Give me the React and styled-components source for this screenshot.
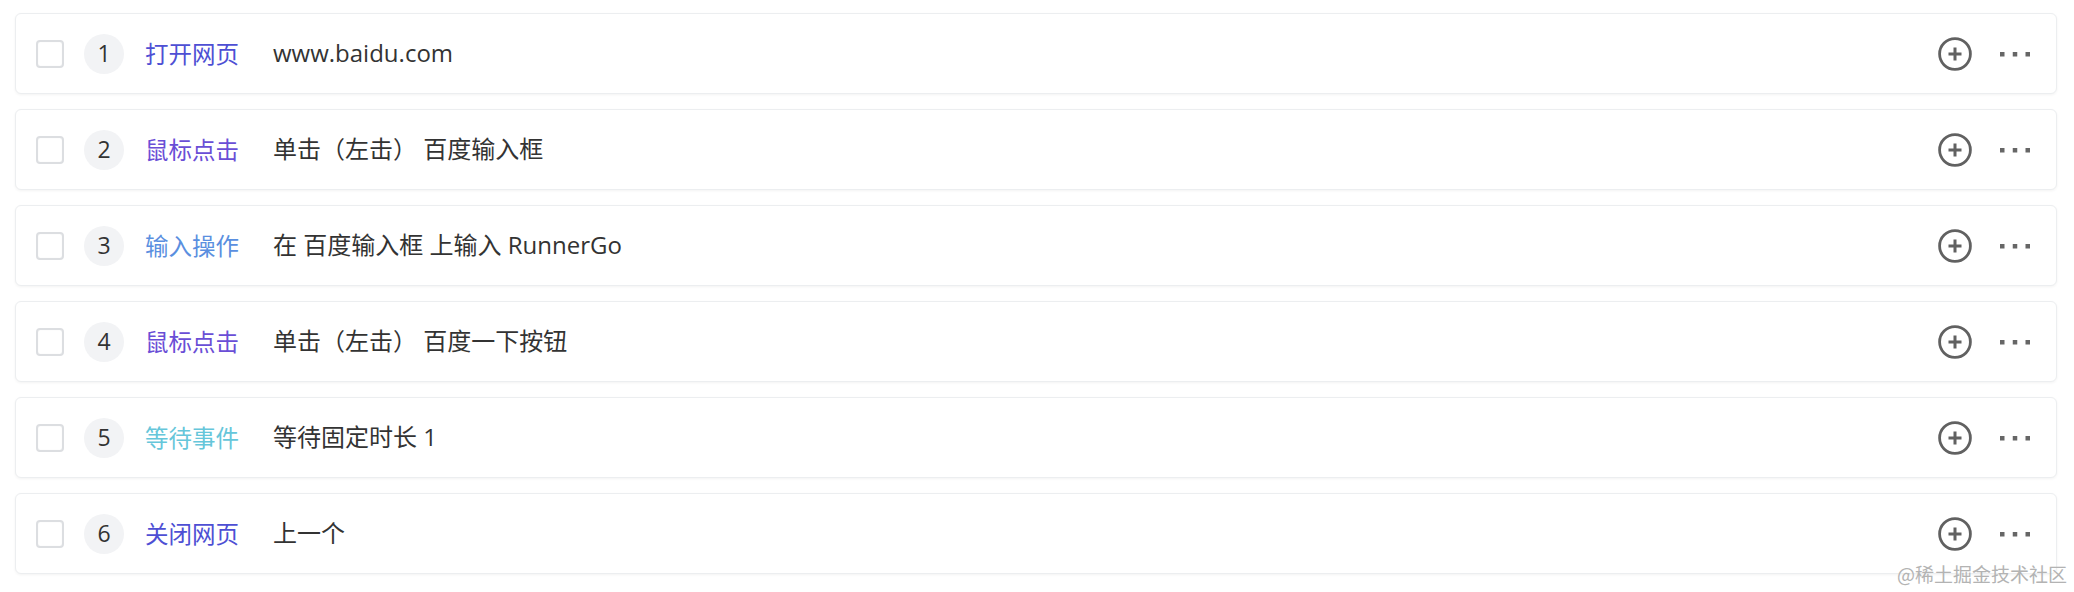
import React from 'react'
import styled, { createGlobalStyle } from 'styled-components'

const GlobalStyle = createGlobalStyle`
  html, body {
    margin: 0;
    padding: 0;
    background: #fff;
  }
  body {
    font-family: "Open Sans", "Noto Sans CJK SC", sans-serif;
    color: #333;
  }
`;

const Page = styled.div`
  position: relative;
  width: 2074px;
  height: 592px;
  box-sizing: border-box;
  padding: 13px 17px 0 15px;
`;

const List = styled.div`
  display: flex;
  flex-direction: column;
  gap: 15px;
`;

const Card = styled.div`
  display: flex;
  align-items: center;
  height: 81px;
  box-sizing: border-box;
  padding: 0 26px 0 20px;
  background: #fff;
  border: 1px solid #eceef0;
  border-radius: 6px;
  box-shadow: 0 1px 3px rgba(0, 0, 0, 0.05);
`;

const Check = styled.span`
  width: 28px;
  height: 28px;
  box-sizing: border-box;
  border: 2px solid #dcdee1;
  border-radius: 4px;
  background: #fff;
  box-shadow: inset 0 0 1px rgba(0, 0, 0, 0.1);
  flex-shrink: 0;
`;

const Num = styled.span`
  width: 40px;
  height: 40px;
  margin-left: 20px;
  border-radius: 50%;
  background: #f2f3f5;
  display: flex;
  align-items: center;
  justify-content: center;
  font-size: 23px;
  line-height: 1;
  color: #333;
  flex-shrink: 0;
`;

const Type = styled.span`
  margin-left: 21px;
  width: 128px;
  font-family: "Noto Sans CJK SC", sans-serif;
  font-size: 23.5px;
  line-height: 1.2;
  color: ${p => p.color};
  flex-shrink: 0;
  white-space: nowrap;
`;

const Desc = styled.span`
  flex: 1;
  font-size: 24px;
  line-height: 1.2;
  color: #333;
  white-space: nowrap;
`;

const Actions = styled.div`
  display: flex;
  align-items: center;
  gap: 28px;
`;

const IconBtn = styled.span`
  display: flex;
  align-items: center;
  justify-content: center;
`;

const Watermark = styled.div`
  position: absolute;
  right: 7px;
  bottom: 5px;
  font-size: 19px;
  color: #b3b3b3;
  font-family: "Noto Sans CJK SC", sans-serif;
`;

const steps = [
  { n: 1, type: '打开网页', color: '#4e4fd4', desc: 'www.baidu.com' },
  { n: 2, type: '鼠标点击', color: '#6a4ed6', desc: '单击（左击） 百度输入框' },
  { n: 3, type: '输入操作', color: '#5a8fe0', desc: '在 百度输入框 上输入 RunnerGo' },
  { n: 4, type: '鼠标点击', color: '#6a4ed6', desc: '单击（左击） 百度一下按钮' },
  { n: 5, type: '等待事件', color: '#66c6da', desc: '等待固定时长 1' },
  { n: 6, type: '关闭网页', color: '#4e4fd4', desc: '上一个' },
];

function PlusIcon() {
  return (
    <svg width="34" height="34" viewBox="0 0 34 34" fill="none">
      <circle cx="17" cy="17" r="15.4" stroke="#616161" strokeWidth="2.8" />
      <path d="M17 10.5v13M10.5 17h13" stroke="#616161" strokeWidth="3" />
    </svg>
  );
}

function MoreIcon() {
  return (
    <svg width="30" height="6" viewBox="0 0 30 6">
      <rect x="0" y="1" width="4.5" height="4.5" fill="#666" />
      <rect x="12.75" y="1" width="4.5" height="4.5" fill="#666" />
      <rect x="25.5" y="1" width="4.5" height="4.5" fill="#666" />
    </svg>
  );
}

export default function App() {
  return (
    <Page>
      <GlobalStyle />
      <List>
        {steps.map(s => (
          <Card key={s.n}>
            <Check />
            <Num>{s.n}</Num>
            <Type color={s.color}>{s.type}</Type>
            <Desc>{s.desc}</Desc>
            <Actions>
              <IconBtn><PlusIcon /></IconBtn>
              <IconBtn><MoreIcon /></IconBtn>
            </Actions>
          </Card>
        ))}
      </List>
      <Watermark>@稀土掘金技术社区</Watermark>
    </Page>
  )
}
